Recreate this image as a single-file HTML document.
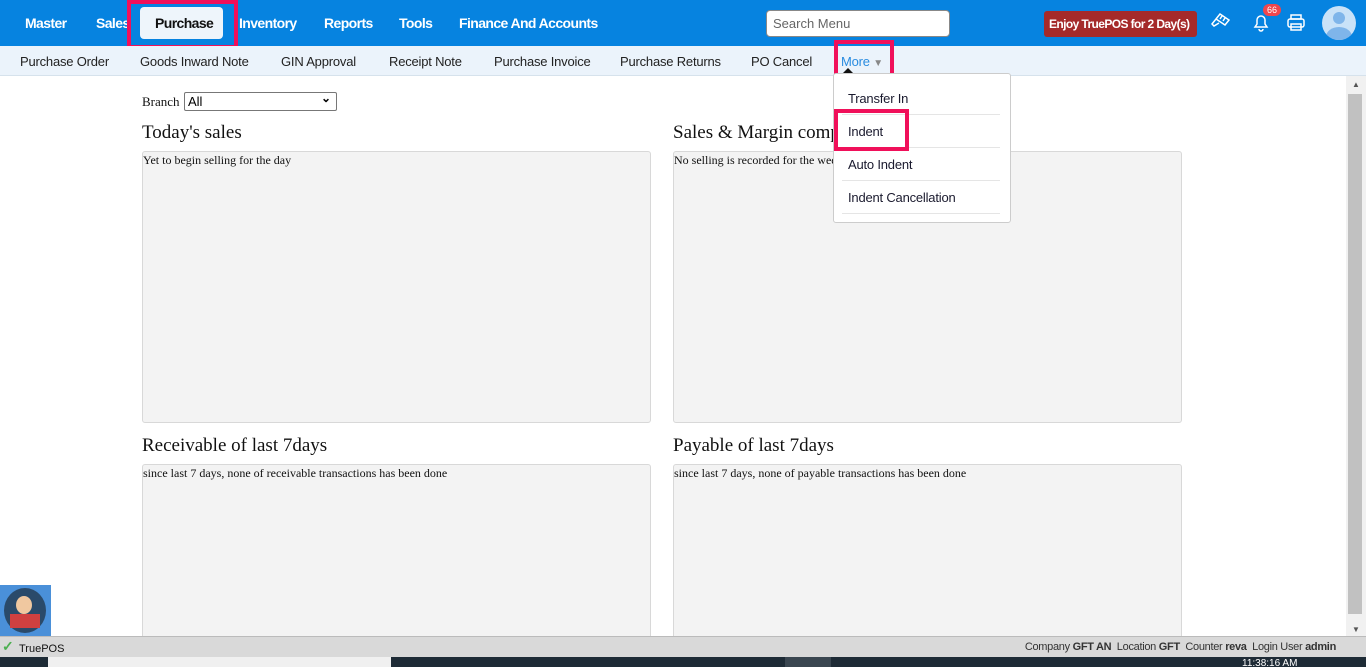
<!DOCTYPE html>
<html><head><meta charset="utf-8"><style>
*{margin:0;padding:0;box-sizing:border-box}
body{width:1366px;height:667px;overflow:hidden;background:#fff;font-family:"Liberation Sans",sans-serif;position:relative}
.top{position:absolute;left:0;top:0;width:1366px;height:46px;background:#0683e0}
.top .m{position:absolute;top:15px;color:#fff;font-weight:bold;font-size:14px;letter-spacing:-0.6px;white-space:nowrap}
.sub{position:absolute;left:0;top:46px;width:1366px;height:30px;background:#ebf3fb;border-bottom:1px solid #d6e2ec}
.sub span{position:absolute;top:8px;font-size:13px;color:#222;letter-spacing:-0.2px;white-space:nowrap}
.red{position:absolute;border:4px solid #f0105a}
.serif{font-family:"Liberation Serif",serif;position:absolute;color:#111}
.panel{position:absolute;background:#f3f3f3;border:1px solid #d8d8d8;border-radius:3px}
.panel div{font-family:"Liberation Serif",serif;font-size:12px;padding:1px 0;color:#111}
h2{font-weight:normal;font-size:19px}
.dd{position:absolute;left:833px;top:73px;width:178px;height:150px;background:#fff;border:1px solid #ccc;border-radius:3px}
.dd div{position:absolute;left:14px;font-size:13px;color:#1a1a2e;letter-spacing:-0.2px}
.dd hr{position:absolute;left:8px;width:158px;border:0;border-top:1px solid #e5e5e5}
</style></head><body>
<div class="top">
<span class="m" style="left:25px">Master</span>
<span class="m" style="left:96px">Sales</span>
<div style="position:absolute;left:140px;top:7px;width:83px;height:32px;background:#eef5fb;border-radius:4px"></div>
<span class="m" style="left:155px;color:#111">Purchase</span>
<span class="m" style="left:239px">Inventory</span>
<span class="m" style="left:324px">Reports</span>
<span class="m" style="left:399px">Tools</span>
<span class="m" style="left:459px">Finance And Accounts</span>
<div style="position:absolute;left:766px;top:10px;width:184px;height:27px;background:#fff;border:1px solid #888;border-radius:4px;font-size:13px;color:#666;padding:5px 6px">Search Menu</div>
<div style="position:absolute;left:1044px;top:11px;width:153px;height:26px;background:#a52a2a;border-radius:3px;color:#fff;font-size:12px;font-weight:bold;letter-spacing:-0.6px;padding:6px 5px;white-space:nowrap">Enjoy TruePOS for 2 Day(s)</div>
<svg style="position:absolute;left:1210px;top:12px" width="22" height="20" viewBox="0 0 22 20" fill="none" stroke="#fff" stroke-width="1.5"><path d="M10 2l9 6-4 5-9-6z M6 7l-4 5 2 2 5-3"/><path d="M12 4l-2 3M15 6l-2 3"/></svg>
<svg style="position:absolute;left:1251px;top:12px" width="20" height="20" viewBox="0 0 20 20" fill="none" stroke="#fff" stroke-width="1.5"><path d="M4 15h12l-2-3V8a4 4 0 0 0-8 0v4z M8 17a2 2 0 0 0 4 0"/></svg>
<div style="position:absolute;left:1263px;top:4px;width:18px;height:12px;background:#f0464d;border-radius:6px;color:#fff;font-size:9px;text-align:center;line-height:12px">66</div>
<svg style="position:absolute;left:1286px;top:14px" width="20" height="18" viewBox="0 0 20 18" fill="none" stroke="#fff" stroke-width="1.5"><rect x="5" y="1" width="10" height="4"/><rect x="2" y="5" width="16" height="8" rx="2"/><rect x="5" y="10" width="10" height="6"/></svg>
<div style="position:absolute;left:1322px;top:6px;width:34px;height:34px;border-radius:50%;background:#c9e2f8;overflow:hidden"><div style="position:absolute;left:11px;top:6px;width:12px;height:12px;border-radius:50%;background:#7fb5ea"></div><div style="position:absolute;left:4px;top:21px;width:26px;height:20px;border-radius:50%;background:#7fb5ea"></div></div>
</div>
<div class="red" style="left:127px;top:0;width:111px;height:49px"></div>
<div class="sub">
<span style="left:20px">Purchase Order</span>
<span style="left:140px">Goods Inward Note</span>
<span style="left:281px">GIN Approval</span>
<span style="left:389px">Receipt Note</span>
<span style="left:494px">Purchase Invoice</span>
<span style="left:620px">Purchase Returns</span>
<span style="left:751px">PO Cancel</span>
<span style="left:841px;color:#2a8ce0">More <span style="position:static;font-size:10px;color:#888">▼</span></span>
</div>
<div class="red" style="left:834px;top:40px;width:60px;height:38px"></div>
<div style="position:absolute;left:842px;top:68px;width:0;height:0;border-left:6px solid transparent;border-right:6px solid transparent;border-bottom:6px solid #111"></div>
<div class="serif" style="left:142px;top:94px;font-size:13px">Branch</div>
<div style="position:absolute;left:184px;top:92px;width:153px;height:19px;border:1px solid #777;border-radius:2px;font-size:13px;padding:1px 3px">All<span style="position:absolute;right:5px;top:-2px;font-size:12px;font-weight:bold">&#x2304;</span></div>
<div class="serif" style="left:142px;top:122px"><h2>Today's sales</h2></div>
<div class="serif" style="left:673px;top:122px"><h2>Sales &amp; Margin comparison</h2></div>
<div class="panel" style="left:142px;top:151px;width:509px;height:272px"><div>Yet to begin selling for the day</div></div>
<div class="panel" style="left:673px;top:151px;width:509px;height:272px"><div>No selling is recorded for the week</div></div>
<div class="serif" style="left:142px;top:435px"><h2>Receivable of last 7days</h2></div>
<div class="serif" style="left:673px;top:435px"><h2>Payable of last 7days</h2></div>
<div class="panel" style="left:142px;top:464px;width:509px;height:190px"><div>since last 7 days, none of receivable transactions has been done</div></div>
<div class="panel" style="left:673px;top:464px;width:509px;height:190px"><div>since last 7 days, none of payable transactions has been done</div></div>
<div class="dd">
<div style="top:17px">Transfer In</div><hr style="top:40px">
<div style="top:50px">Indent</div><hr style="top:73px">
<div style="top:83px">Auto Indent</div><hr style="top:106px">
<div style="top:116px">Indent Cancellation</div><hr style="top:139px">
</div>
<div class="red" style="left:834px;top:109px;width:75px;height:42px"></div>
<div style="position:absolute;left:1346px;top:76px;width:20px;height:560px;background:#f1f1f1"><div style="position:absolute;left:0;top:4px;font-size:8px;color:#555;width:20px;text-align:center">▲</div><div style="position:absolute;left:2px;top:18px;width:14px;height:520px;background:#c1c1c1"></div><div style="position:absolute;left:0;bottom:2px;font-size:8px;color:#555;width:20px;text-align:center">▼</div></div>
<div style="position:absolute;left:0;top:585px;width:51px;height:51px;background:#4a90d9"><div style="position:absolute;left:4px;top:3px;width:42px;height:45px;border-radius:50%;background:#2a4a6a"><div style="position:absolute;left:12px;top:8px;width:16px;height:18px;border-radius:50%;background:#f0c8a0"></div><div style="position:absolute;left:6px;top:26px;width:30px;height:14px;background:#d04040"></div></div></div>
<div style="position:absolute;left:0;top:636px;width:1366px;height:21px;background:#d9d9d9;border-top:1px solid #bbb">
<span style="position:absolute;left:2px;top:1px;color:#4caf50;font-size:14px;font-weight:bold">✓</span>
<span style="position:absolute;left:19px;top:6px;font-size:11px;color:#111">TruePOS</span>
<span style="position:absolute;right:30px;top:4px;font-size:11px;color:#333;letter-spacing:-0.3px">Company <b>GFT AN</b>&nbsp; Location <b>GFT</b>&nbsp; Counter <b>reva</b>&nbsp; Login User <b>admin</b></span>
</div>
<div style="position:absolute;left:0;top:657px;width:1366px;height:10px;background:#1e2b36"><div style="position:absolute;left:48px;top:0;width:343px;height:10px;background:#f0f0f0"></div><div style="position:absolute;left:785px;top:0;width:46px;height:10px;background:#3a4650"></div><span style="position:absolute;left:1242px;top:1px;color:#fff;font-size:10px">11:38:16 AM</span></div>
</body></html>
